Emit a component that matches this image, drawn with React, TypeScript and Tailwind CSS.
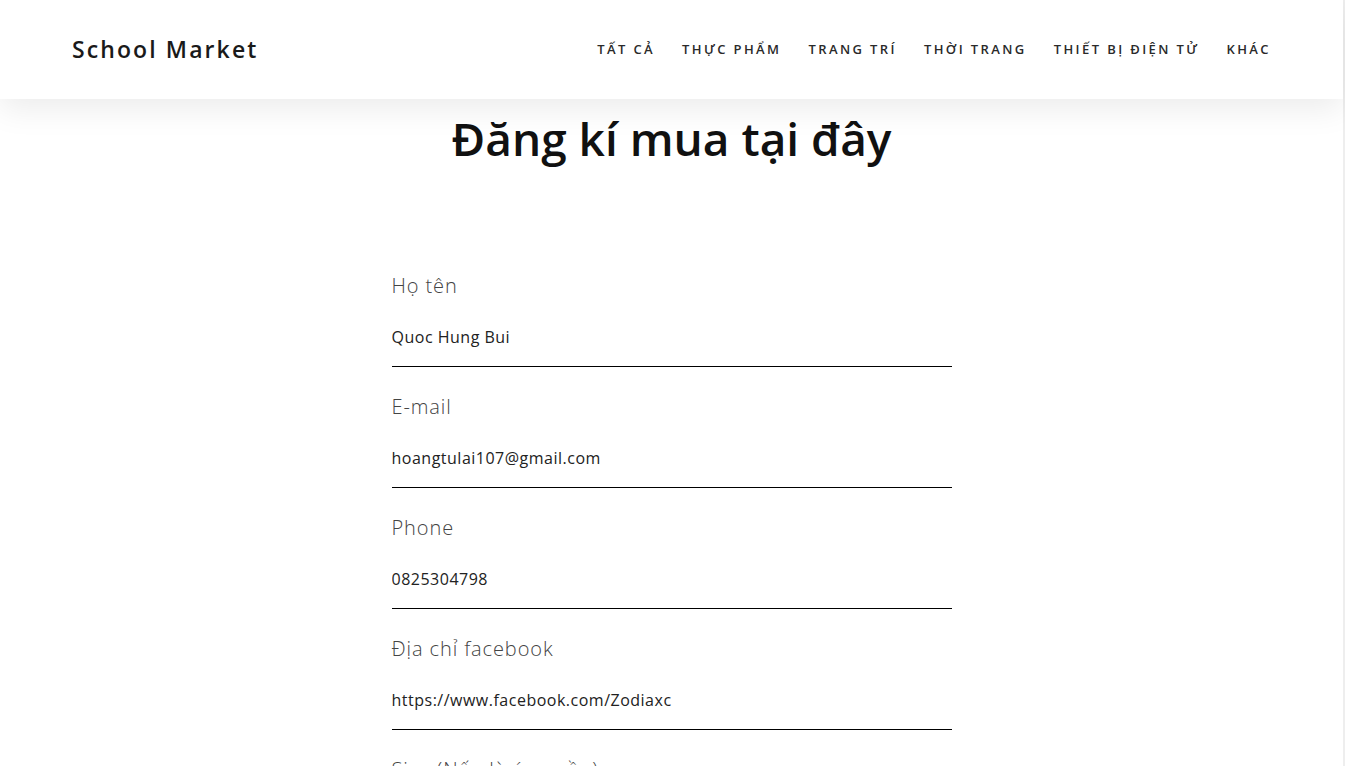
import React from "react";

const navItems = [
	"Tất cả",
	"Thực phẩm",
	"Trang trí",
	"Thời trang",
	"Thiết bị điện tử",
	"Khác",
];

const fields = [
	{ label: "Họ tên", value: "Quoc Hung Bui" },
	{ label: "E-mail", value: "hoangtulai107@gmail.com" },
	{ label: "Phone", value: "0825304798" },
	{ label: "Địa chỉ facebook", value: "https://www.facebook.com/Zodiaxc" },
	{ label: "Size (Nếu là áo quần)", value: "" },
];

const App = () => {
	return (
		<div className="min-h-screen bg-white border-r-2 border-[#eeeeee] font-['Open_Sans',sans-serif] text-[#111]">
			<header className="relative z-10 h-[99px] flex items-center justify-between pl-[72px] pr-[72px] bg-white shadow-[0_10px_30px_rgba(0,0,0,0.08)]">
				<div className="text-[23px] font-semibold tracking-[2.1px] text-[#1a1a1a]">
					School Market
				</div>
				<nav className="flex items-center gap-[27px]">
					{navItems.map((item) => (
						<a
							key={item}
							href="#"
							className="uppercase text-[13px] font-semibold tracking-[2.4px] text-[#2a2a2a]"
						>
							{item}
						</a>
					))}
				</nav>
			</header>

			<main className="flex flex-col items-center">
				<h1 className="mt-[12px] text-[46px] leading-[55px] font-semibold text-[#111]">
					Đăng kí mua tại đây
				</h1>

				<form className="w-[560px] mt-[106px] flex flex-col gap-[26px]">
					{fields.map((f) => (
						<div key={f.label} className="flex flex-col">
							<label className="text-[20px] leading-[28px] font-light tracking-[0.9px] text-[#444]">
								{f.label}
							</label>
							<input
								type="text"
								readOnly
								value={f.value}
								className="h-[67px] pt-[8px] pb-0 border-b border-black bg-transparent text-[16px] tracking-[0.5px] text-[#222] outline-none"
							/>
						</div>
					))}
				</form>
			</main>
		</div>
	);
};

export default App;
